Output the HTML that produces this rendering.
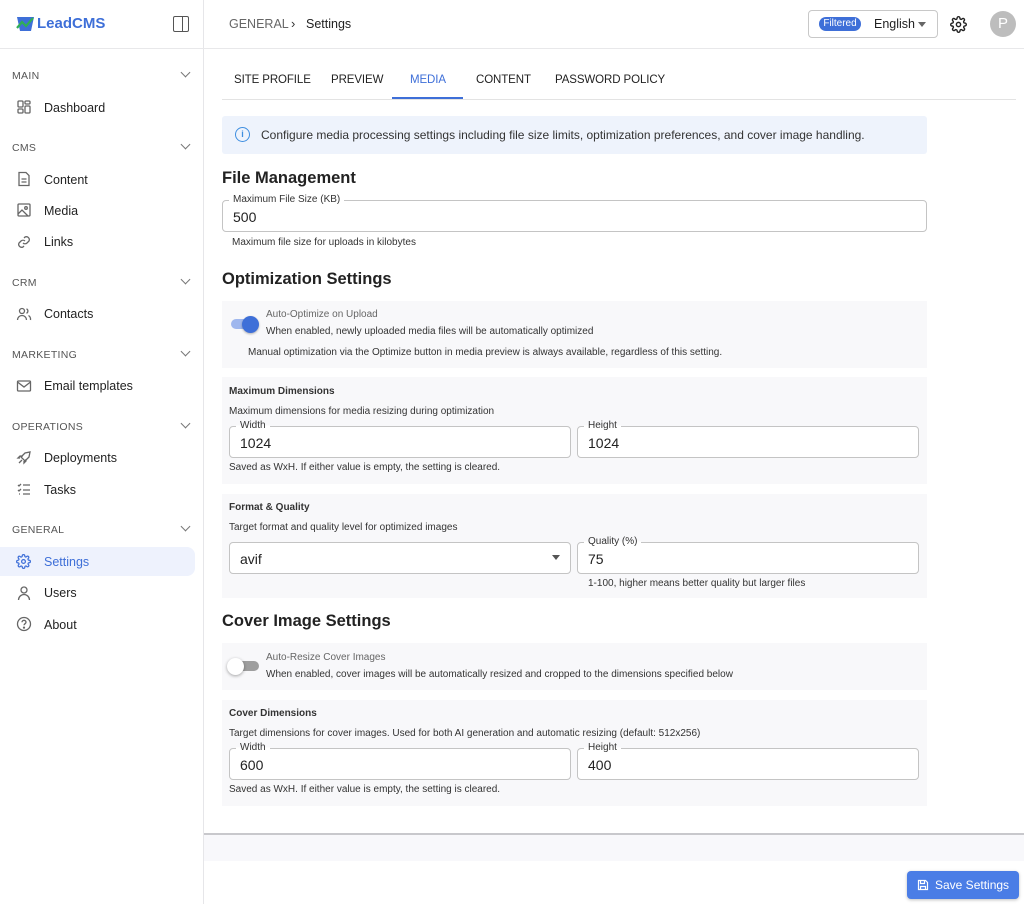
<!DOCTYPE html>
<html><head><meta charset="utf-8"><style>
*{box-sizing:border-box;margin:0;padding:0}
body{width:1024px;height:904px;overflow:hidden;font-family:"Liberation Sans",sans-serif;background:#fff;color:#1f1f1f;position:relative}
.a{position:absolute}
.side{left:0;top:0;width:204px;height:904px;border-right:1px solid #e6e6e9;background:#fff}
.sec{left:12px;font-size:10.5px;color:#555;letter-spacing:.3px}
.chev{left:182px;width:7px;height:7px;border-right:1.3px solid #777;border-bottom:1.3px solid #777;transform:rotate(45deg)}
.item{left:44px;font-size:12.5px;color:#222}
.ic{left:16px;width:16px;height:16px}
.lbl{font-size:10px;color:#333}
.help{font-size:10px;color:#333}
.box{background:#f8f8fa}
.inp{border:1px solid #c4c4c4;border-radius:4px;background:#fff;height:32px}
.inp span{position:absolute;left:10px;top:8px;font-size:14px;color:#222}
.inp b{position:absolute;left:6px;top:-7px;background:linear-gradient(#f8f8fa 50%,#fff 50%);padding:0 4px;font-size:10px;font-weight:normal;color:#333}
.tab{top:74px;font-size:11.5px;color:#222;letter-spacing:-.1px}
</style></head><body>
<div class="a side"></div>
<svg class="a" style="left:16px;top:15px" width="19" height="17" viewBox="0 0 19 17"><path d="M1 2h17l-3 14H4z" fill="#3e6fd8"/><path d="M1 13l5-6 4 4 7-8" stroke="#2fae58" stroke-width="2.2" fill="none"/></svg>
<div class="a" style="left:37px;top:15px;font-size:15px;font-weight:bold;color:#3e6fd8">LeadCMS</div>
<div class="a" style="left:173px;top:16px;width:16px;height:16px;border:1.4px solid #555;border-radius:2px"></div>
<div class="a" style="left:182px;top:16px;width:1.4px;height:16px;background:#555"></div>
<div class="a" style="left:0;top:48px;width:1024px;height:1px;background:#e8e8ea"></div>
<div class="a" style="left:229px;top:17px;font-size:12.5px;color:#666">GENERAL</div>
<div class="a" style="left:291px;top:16px;font-size:13px;color:#333">›</div>
<div class="a" style="left:306px;top:17px;font-size:12.5px;color:#222">Settings</div>
<div class="a" style="left:808px;top:10px;width:130px;height:28px;border:1px solid #c8c8c8;border-radius:4px"></div>
<div class="a" style="left:819px;top:17px;width:42px;height:14px;border-radius:7px;background:#3e6fd8;color:#fff;font-size:10px;text-align:center;line-height:14px">Filtered</div>
<div class="a" style="left:874px;top:17px;font-size:12.5px">English</div>
<div class="a" style="left:918px;top:22px;border:4px solid transparent;border-top:5px solid #666"></div>
<svg class="a" style="left:950px;top:16px" width="17" height="17" viewBox="0 0 24 24" fill="none" stroke="#222" stroke-width="2"><circle cx="12" cy="12" r="3"/><path d="M19.4 15a1.7 1.7 0 00.3 1.8l.1.1a2 2 0 11-2.8 2.8l-.1-.1a1.7 1.7 0 00-1.8-.3 1.7 1.7 0 00-1 1.5V21a2 2 0 11-4 0v-.1a1.7 1.7 0 00-1.1-1.5 1.7 1.7 0 00-1.8.3l-.1.1a2 2 0 11-2.8-2.8l.1-.1a1.7 1.7 0 00.3-1.8 1.7 1.7 0 00-1.5-1H3a2 2 0 110-4h.1a1.7 1.7 0 001.5-1.1 1.7 1.7 0 00-.3-1.8l-.1-.1a2 2 0 112.8-2.8l.1.1a1.7 1.7 0 001.8.3H9a1.7 1.7 0 001-1.5V3a2 2 0 114 0v.1a1.7 1.7 0 001 1.5 1.7 1.7 0 001.8-.3l.1-.1a2 2 0 112.8 2.8l-.1.1a1.7 1.7 0 00-.3 1.8V9a1.7 1.7 0 001.5 1H21a2 2 0 110 4h-.1a1.7 1.7 0 00-1.5 1z"/></svg>
<div class="a" style="left:990px;top:11px;width:26px;height:26px;border-radius:50%;background:#bdbdbd;color:#fff;font-size:15px;text-align:center;line-height:26px">P</div>

<div class="a sec" style="top:70px">MAIN</div><div class="a chev" style="top:69px"></div>
<svg class="a ic" style="top:99px" viewBox="0 0 16 16" fill="none" stroke="#666" stroke-width="1.3"><rect x="2" y="2" width="5" height="6" rx="1"/><rect x="9" y="2" width="5" height="3" rx="1"/><rect x="9" y="7" width="5" height="7" rx="1"/><rect x="2" y="10" width="5" height="4" rx="1"/></svg>
<div class="a item" style="top:101px">Dashboard</div>
<div class="a sec" style="top:142px">CMS</div><div class="a chev" style="top:141px"></div>
<svg class="a ic" style="top:171px" viewBox="0 0 16 16" fill="none" stroke="#666" stroke-width="1.3"><path d="M3 1.5h7l3 3v10H3z M5.5 8h5M5.5 11h5"/></svg>
<div class="a item" style="top:173px">Content</div>
<svg class="a ic" style="top:202px" viewBox="0 0 16 16" fill="none" stroke="#666" stroke-width="1.3"><rect x="2" y="2" width="12" height="12" rx="1"/><path d="M2 12l4-4 6 6"/><circle cx="10" cy="6" r="1.3"/></svg>
<div class="a item" style="top:204px">Media</div>
<svg class="a ic" style="top:234px" viewBox="0 0 16 16" fill="none" stroke="#666" stroke-width="1.3"><path d="M7 9a3 3 0 004 0l2-2a3 3 0 00-4-4l-1 1M9 7a3 3 0 00-4 0l-2 2a3 3 0 004 4l1-1"/></svg>
<div class="a item" style="top:235px">Links</div>
<div class="a sec" style="top:277px">CRM</div><div class="a chev" style="top:276px"></div>
<svg class="a ic" style="top:306px" viewBox="0 0 16 16" fill="none" stroke="#666" stroke-width="1.3"><circle cx="6" cy="5" r="2.5"/><path d="M1.5 14a4.5 4.5 0 019 0M10.5 2.8a2.5 2.5 0 010 4.5M12.5 9.5a4.5 4.5 0 012 4.5"/></svg>
<div class="a item" style="top:307px">Contacts</div>
<div class="a sec" style="top:349px">MARKETING</div><div class="a chev" style="top:348px"></div>
<svg class="a ic" style="top:378px" viewBox="0 0 16 16" fill="none" stroke="#666" stroke-width="1.3"><rect x="1.5" y="3" width="13" height="10" rx="1"/><path d="M1.5 4l6.5 5 6.5-5"/></svg>
<div class="a item" style="top:379px">Email templates</div>
<div class="a sec" style="top:421px">OPERATIONS</div><div class="a chev" style="top:420px"></div>
<svg class="a ic" style="top:450px" viewBox="0 0 16 16" fill="none" stroke="#666" stroke-width="1.3"><path d="M6 10l-3 3M5 7l4-4 5-1-1 5-4 4-4-4zM4 8H2l2-2h3M8 11v2l2-2V9"/></svg>
<div class="a item" style="top:451px">Deployments</div>
<svg class="a ic" style="top:481px" viewBox="0 0 16 16" fill="none" stroke="#666" stroke-width="1.3"><path d="M2 4l1 1 2-2M2 9l1 1 2-2M7 4h7M7 9h7M7 13h7M3 13h1"/></svg>
<div class="a item" style="top:483px">Tasks</div>
<div class="a sec" style="top:524px">GENERAL</div><div class="a chev" style="top:523px"></div>
<div class="a" style="left:0;top:547px;width:195px;height:29px;background:#eef2fd;border-radius:0 8px 8px 0"></div>
<svg class="a" style="left:16px;top:554px" width="15" height="15" viewBox="0 0 24 24" fill="none" stroke="#3e6fd8" stroke-width="2"><circle cx="12" cy="12" r="3"/><path d="M19.4 15a1.7 1.7 0 00.3 1.8l.1.1a2 2 0 11-2.8 2.8l-.1-.1a1.7 1.7 0 00-1.8-.3 1.7 1.7 0 00-1 1.5V21a2 2 0 11-4 0v-.1a1.7 1.7 0 00-1.1-1.5 1.7 1.7 0 00-1.8.3l-.1.1a2 2 0 11-2.8-2.8l.1-.1a1.7 1.7 0 00.3-1.8 1.7 1.7 0 00-1.5-1H3a2 2 0 110-4h.1a1.7 1.7 0 001.5-1.1 1.7 1.7 0 00-.3-1.8l-.1-.1a2 2 0 112.8-2.8l.1.1a1.7 1.7 0 001.8.3H9a1.7 1.7 0 001-1.5V3a2 2 0 114 0v.1a1.7 1.7 0 001 1.5 1.7 1.7 0 001.8-.3l.1-.1a2 2 0 112.8 2.8l-.1.1a1.7 1.7 0 00-.3 1.8V9a1.7 1.7 0 001.5 1H21a2 2 0 110 4h-.1a1.7 1.7 0 00-1.5 1z"/></svg>
<div class="a item" style="top:555px;color:#3e6fd8">Settings</div>
<svg class="a ic" style="top:585px" viewBox="0 0 16 16" fill="none" stroke="#666" stroke-width="1.3"><circle cx="8" cy="5" r="3"/><path d="M2.5 15a5.5 5.5 0 0111 0"/></svg>
<div class="a item" style="top:586px">Users</div>
<svg class="a ic" style="top:616px" viewBox="0 0 16 16" fill="none" stroke="#666" stroke-width="1.3"><circle cx="8" cy="8" r="6.5"/><path d="M6 6.3a2 2 0 114 0c0 1.3-2 1.5-2 3"/><circle cx="8" cy="11.6" r=".5" fill="#666"/></svg>
<div class="a item" style="top:618px">About</div>

<div class="a tab" style="left:234px">SITE PROFILE</div>
<div class="a tab" style="left:331px">PREVIEW</div>
<div class="a tab" style="left:410px;color:#3e6fd8">MEDIA</div>
<div class="a tab" style="left:476px">CONTENT</div>
<div class="a tab" style="left:555px">PASSWORD POLICY</div>
<div class="a" style="left:222px;top:99px;width:794px;height:1px;background:#e3e3e3"></div>
<div class="a" style="left:392px;top:97px;width:71px;height:2px;background:#3e6fd8"></div>

<div class="a" style="left:222px;top:116px;width:705px;height:38px;background:#eef3fc;border-radius:3px"></div>
<div class="a" style="left:235px;top:127px;width:15px;height:15px;border:1.4px solid #3e8ee0;border-radius:50%;color:#3e8ee0;font-size:9px;text-align:center;line-height:12px;font-weight:bold">i</div>
<div class="a" style="left:261px;top:128px;font-size:12px;color:#333">Configure media processing settings including file size limits, optimization preferences, and cover image handling.</div>

<div class="a" style="left:222px;top:169px;font-size:16.5px;font-weight:bold;color:#222">File Management</div>
<div class="a inp" style="left:222px;top:200px;width:705px;border-color:#c4c4c4"><b style="background:#fff">Maximum File Size (KB)</b><span>500</span></div>
<div class="a help" style="left:232px;top:237px">Maximum file size for uploads in kilobytes</div>

<div class="a" style="left:222px;top:270px;font-size:16.5px;font-weight:bold;color:#222">Optimization Settings</div>
<div class="a box" style="left:222px;top:301px;width:705px;height:67px"></div>
<div class="a" style="left:231px;top:319px;width:28px;height:10px;border-radius:5px;background:#9fb7ee"></div>
<div class="a" style="left:242px;top:316px;width:17px;height:17px;border-radius:50%;background:#3e6fd8;box-shadow:0 1px 2px rgba(0,0,0,.3)"></div>
<div class="a lbl" style="left:266px;top:309px;color:#666">Auto-Optimize on Upload</div>
<div class="a lbl" style="left:266px;top:326px">When enabled, newly uploaded media files will be automatically optimized</div>
<div class="a lbl" style="left:248px;top:347px">Manual optimization via the Optimize button in media preview is always available, regardless of this setting.</div>

<div class="a box" style="left:222px;top:377px;width:705px;height:107px"></div>
<div class="a lbl" style="left:229px;top:386px;font-weight:bold;color:#333">Maximum Dimensions</div>
<div class="a lbl" style="left:229px;top:406px">Maximum dimensions for media resizing during optimization</div>
<div class="a inp" style="left:229px;top:426px;width:342px"><b>Width</b><span>1024</span></div>
<div class="a inp" style="left:577px;top:426px;width:342px"><b>Height</b><span>1024</span></div>
<div class="a help" style="left:229px;top:462px">Saved as WxH. If either value is empty, the setting is cleared.</div>

<div class="a box" style="left:222px;top:494px;width:705px;height:104px"></div>
<div class="a lbl" style="left:229px;top:502px;font-weight:bold;color:#333">Format &amp; Quality</div>
<div class="a lbl" style="left:229px;top:522px">Target format and quality level for optimized images</div>
<div class="a inp" style="left:229px;top:542px;width:342px"><span>avif</span></div>
<div class="a" style="left:552px;top:555px;border:4px solid transparent;border-top:5px solid #555"></div>
<div class="a inp" style="left:577px;top:542px;width:342px"><b>Quality (%)</b><span>75</span></div>
<div class="a help" style="left:588px;top:578px">1-100, higher means better quality but larger files</div>

<div class="a" style="left:222px;top:612px;font-size:16.5px;font-weight:bold;color:#222">Cover Image Settings</div>
<div class="a box" style="left:222px;top:643px;width:705px;height:47px"></div>
<div class="a" style="left:231px;top:661px;width:28px;height:10px;border-radius:5px;background:#9e9e9e"></div>
<div class="a" style="left:227px;top:658px;width:17px;height:17px;border-radius:50%;background:#fff;box-shadow:0 1px 3px rgba(0,0,0,.35)"></div>
<div class="a lbl" style="left:266px;top:652px;color:#666">Auto-Resize Cover Images</div>
<div class="a lbl" style="left:266px;top:669px">When enabled, cover images will be automatically resized and cropped to the dimensions specified below</div>

<div class="a box" style="left:222px;top:700px;width:705px;height:106px"></div>
<div class="a lbl" style="left:229px;top:708px;font-weight:bold;color:#333">Cover Dimensions</div>
<div class="a lbl" style="left:229px;top:728px">Target dimensions for cover images. Used for both AI generation and automatic resizing (default: 512x256)</div>
<div class="a inp" style="left:229px;top:748px;width:342px"><b>Width</b><span>600</span></div>
<div class="a inp" style="left:577px;top:748px;width:342px"><b>Height</b><span>400</span></div>
<div class="a help" style="left:229px;top:784px">Saved as WxH. If either value is empty, the setting is cleared.</div>

<div class="a" style="left:204px;top:833px;width:820px;height:2px;background:#c8c8cc"></div>
<div class="a" style="left:204px;top:835px;width:820px;height:26px;background:#f8f8fb"></div>
<div class="a" style="left:907px;top:871px;width:112px;height:28px;background:#4a7de6;border-radius:4px;box-shadow:0 1px 3px rgba(0,0,0,.25)"></div>
<svg class="a" style="left:917px;top:879px" width="12" height="12" viewBox="0 0 12 12" fill="none" stroke="#fff" stroke-width="1.2"><path d="M1.5 1.5h7l2 2v7h-9z M3.5 1.5v3h4v-3 M3.5 10.5v-3h5v3"/></svg>
<div class="a" style="left:935px;top:878px;font-size:12px;color:#fff">Save Settings</div>
</body></html>
